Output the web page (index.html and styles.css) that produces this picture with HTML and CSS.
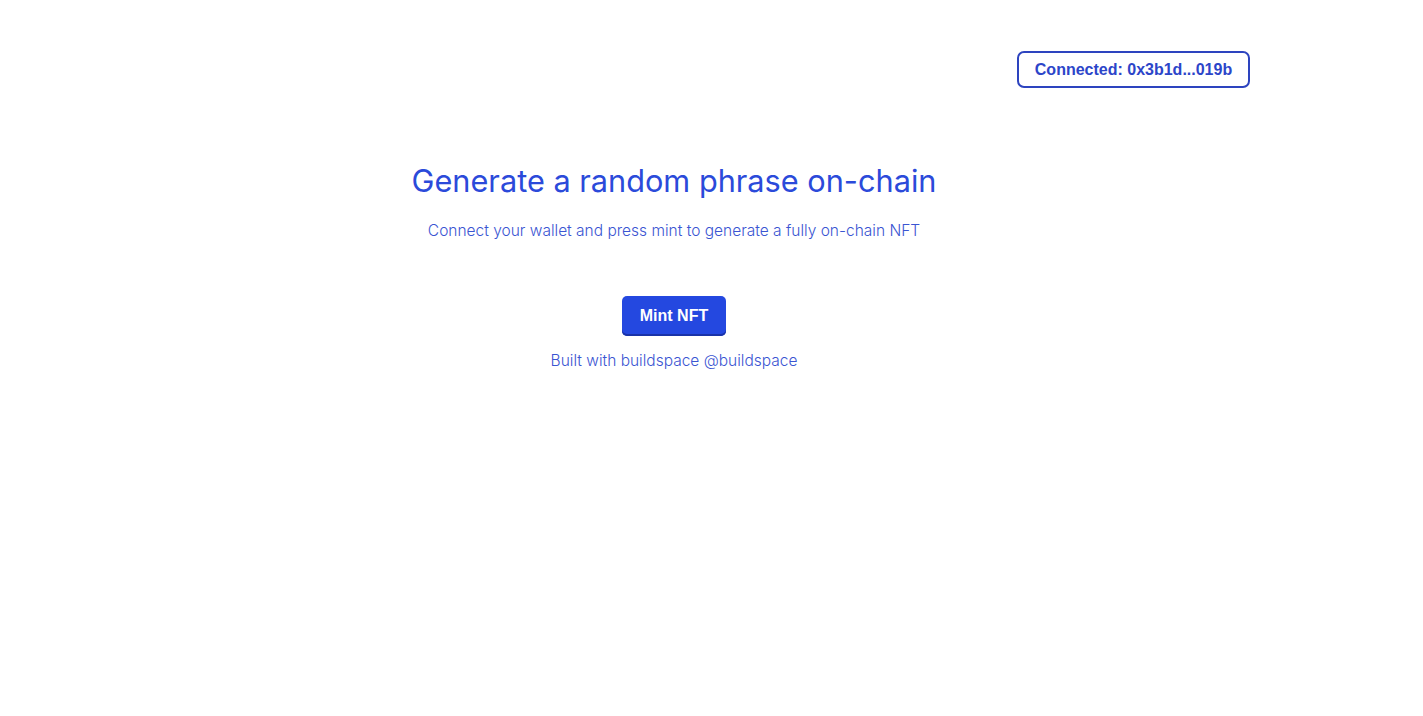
FILE: index.html
```html
<!DOCTYPE html>
<html lang="en">
<head>
<meta charset="utf-8">
<title>Random phrase NFT</title>
<link rel="stylesheet" href="styles.css">
</head>
<body>
<div class="app">
  <header class="topbar">
    <button class="connect-btn">Connected: 0x3b1d...019b</button>
  </header>
  <main class="hero">
    <h1 class="title">Generate a random phrase on-chain</h1>
    <p class="subtitle">Connect your wallet and press mint to generate a fully on-chain NFT</p>
    <button class="mint-btn">Mint NFT</button>
    <p class="footer">Built with buildspace @buildspace</p>
  </main>
</div>
</body>
</html>
```
FILE: styles.css
```css
html, body {
  margin: 0;
  padding: 0;
  background: #ffffff;
}
.app {
  width: 1348px;
  font-family: Inter, "Noto Sans", sans-serif;
}
.topbar {
  display: flex;
  justify-content: flex-end;
  padding: 51px 98px 0 0;
}
.connect-btn {
  box-sizing: border-box;
  height: 37px;
  width: 233px;
  padding: 0;
  border: 2px solid #2d44bf;
  border-radius: 7px;
  background: #ffffff;
  color: #2c45c9;
  font-family: "Liberation Sans", Arial, sans-serif;
  font-weight: bold;
  font-size: 16px;
}
.hero {
  display: flex;
  flex-direction: column;
  align-items: center;
}
.title {
  margin: 73px 0 0;
  font-size: 30.7px;
  line-height: 40px;
  font-weight: 400;
  color: #2b4ada;
}
.subtitle {
  margin: 20px 0 0;
  font-size: 15.5px;
  line-height: 20px;
  font-weight: 300;
  color: #3a55d2;
}
.mint-btn {
  box-sizing: border-box;
  margin-top: 55px;
  width: 104px;
  height: 40px;
  border: none;
  border-radius: 5px;
  background: #2448e0;
  box-shadow: inset 0 -2px 0 #1a33a8;
  color: #ffffff;
  font-family: "Liberation Sans", Arial, sans-serif;
  font-weight: bold;
  font-size: 16px;
}
.footer {
  margin: 15px 0 0;
  font-size: 15.5px;
  line-height: 20px;
  font-weight: 300;
  color: #3a55d2;
}
```
